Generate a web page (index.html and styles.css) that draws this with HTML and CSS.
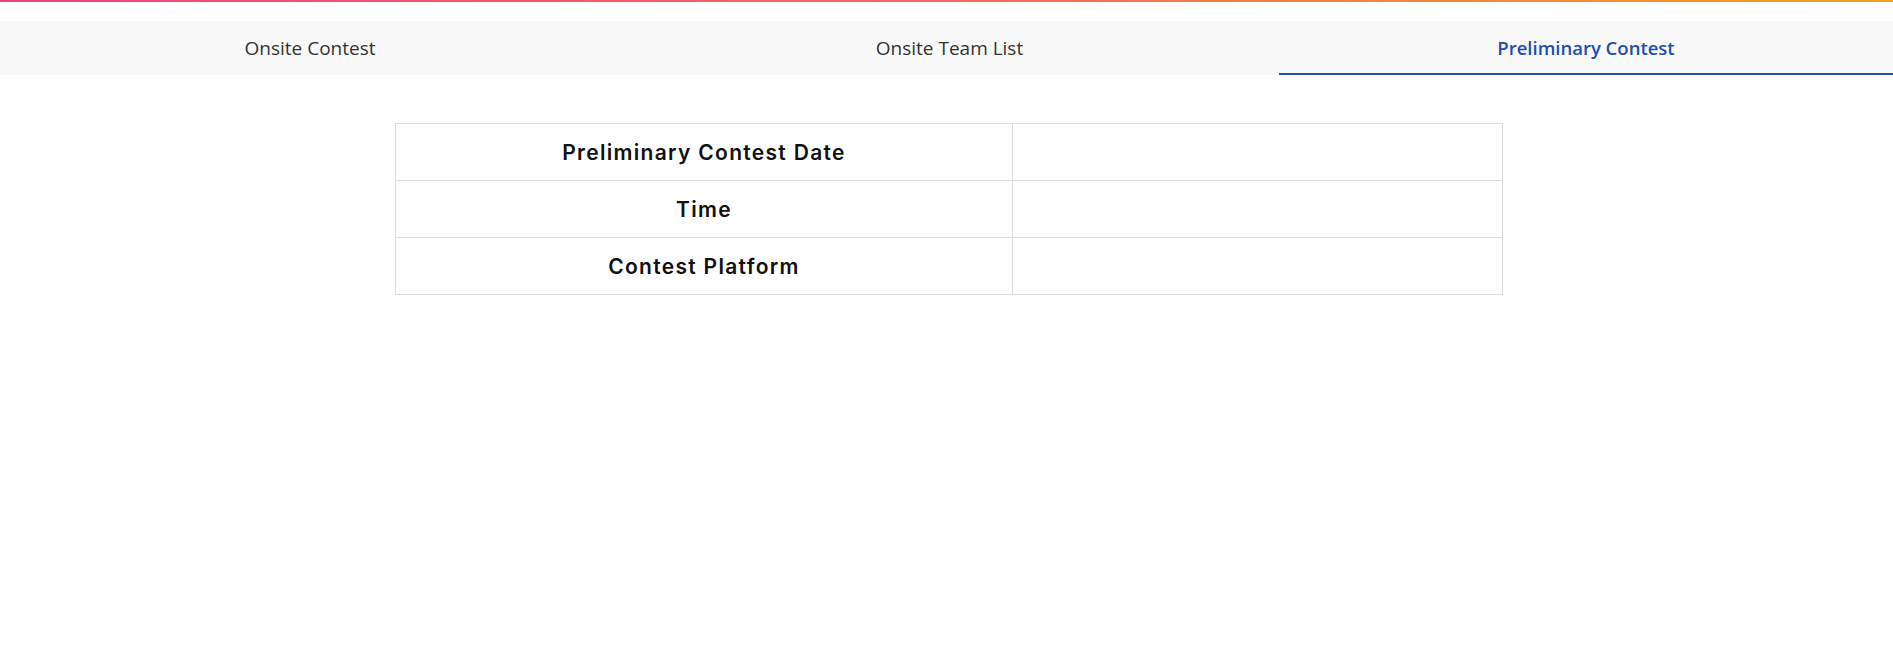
FILE: index.html
```html
<!DOCTYPE html>
<html lang="en">
<head>
<meta charset="utf-8">
<title>Preliminary Contest</title>
<link rel="stylesheet" href="styles.css">
</head>
<body>
<div class="topbar"></div>
<nav class="tabs">
  <a class="tab">Onsite Contest</a>
  <a class="tab">Onsite Team List</a>
  <a class="tab active">Preliminary Contest</a>
</nav>
<main class="content">
  <table class="info">
    <tr><th>Preliminary Contest Date</th><td></td></tr>
    <tr><th>Time</th><td></td></tr>
    <tr><th>Contest Platform</th><td></td></tr>
  </table>
</main>
</body>
</html>
```

FILE: styles.css
```css
html, body {
  margin: 0;
  padding: 0;
  background: #ffffff;
}
body {
  font-family: "Open Sans", "Noto Sans", sans-serif;
}
.topbar {
  height: 2px;
  background: linear-gradient(to right, #f0437c, #f46a5e 50%, #f6a01c);
}
.tabs {
  margin-top: 19px;
  display: grid;
  grid-template-columns: 620px 659px 1fr;
  background: #f9f9f9;
  height: 54px;
}
.tab {
  display: flex;
  align-items: center;
  justify-content: center;
  font-size: 19px;
  color: #333333;
  box-sizing: border-box;
  border-bottom: 2px solid transparent;
  padding-top: 1px;
}
.tab.active {
  color: #1c4fb0;
  font-weight: 600;
  font-size: 18.5px;
  border-bottom-color: #1c4fb0;
}
.content {
  display: flex;
  justify-content: center;
  padding: 48px 0 0 5px;
}
.info {
  width: 1108px;
  border-collapse: collapse;
}
.info th, .info td {
  border: 1px solid #dedede;
  height: 57px;
  padding: 0;
  box-sizing: border-box;
}
.info th {
  width: 617px;
  font-family: "Inter", sans-serif;
  font-weight: 600;
  font-size: 21px;
  letter-spacing: 1.3px;
  color: #111111;
  text-align: center;
}
```
